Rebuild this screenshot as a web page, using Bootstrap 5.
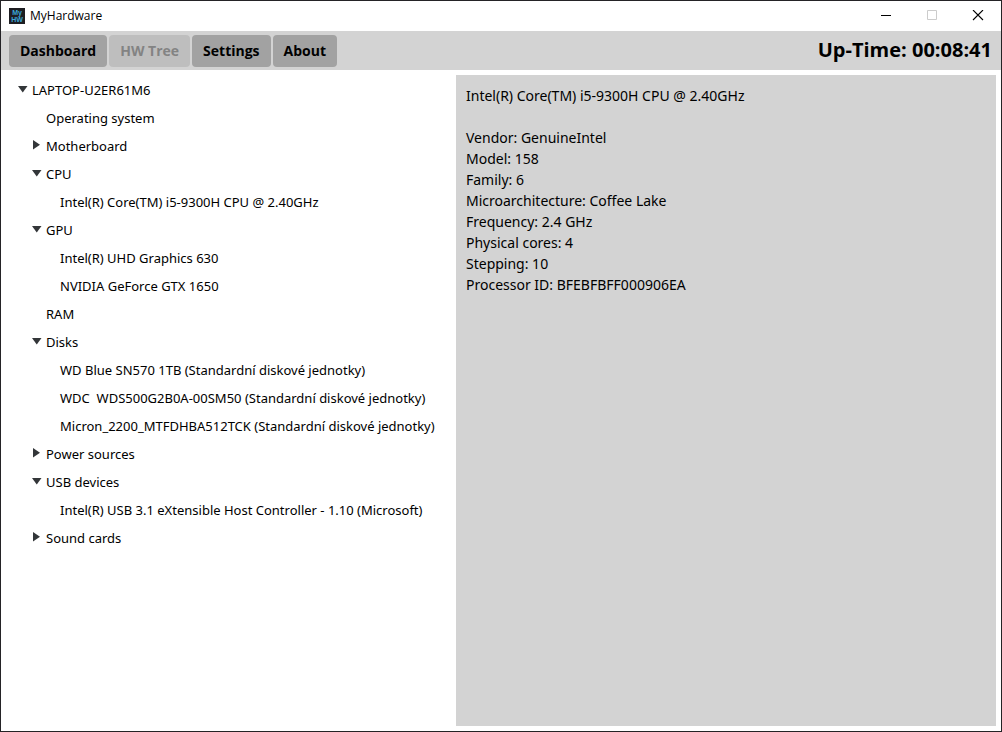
<!DOCTYPE html>
<html lang="en">
<head>
<meta charset="utf-8">
<meta name="viewport" content="width=device-width, initial-scale=1">
<title>MyHardware</title>
<link href="https://cdn.jsdelivr.net/npm/bootstrap@5.3.0/dist/css/bootstrap.min.css" rel="stylesheet">
<style>
  body { font-family: "Noto Sans", "Open Sans", sans-serif; font-size: 13px; color: #000; }
  .app-window { border: 1px solid #242326; }
  .title-bar { height: 30px; font-size: 12px; }
  .app-icon { width: 16px; height: 16px; margin-left: 8px; font: 700 7px "Liberation Sans", sans-serif; }
  .app-name { font-family: "Open Sans", sans-serif; margin-left: 5px; line-height: 16px; }
  .caption-btn { width: 46px; height: 30px; }
  .caption-btn:disabled { opacity: 1; }
  .tool-bar { background: #d3d3d3; padding: 4px 9px 3px 8px; gap: 2px; font-family: "Open Sans", sans-serif; }
  .tool-btn { --bs-btn-padding-x: 11px; --bs-btn-padding-y: 0; --bs-btn-font-size: 14px; --bs-btn-font-family: "Open Sans", sans-serif;
    --bs-btn-bg: #a2a2a2; --bs-btn-color: #000; --bs-btn-border-width: 0;
    --bs-btn-hover-bg: #989898; --bs-btn-hover-color: #000; --bs-btn-active-bg: #8c8c8c;
    --bs-btn-disabled-bg: #bebebe; --bs-btn-disabled-color: #838383; --bs-btn-disabled-opacity: 1;
    --bs-btn-border-radius: 4px; height: 32px; padding-bottom: 2px; font-weight: 700; }
  .up-time { font-size: 20px; font-weight: 700; line-height: 30px; padding-bottom: 2px; }
  .hw-pane { flex: 0 0 455px; padding: 7px 0 0 17px; }
  .hw-pane ul ul { padding-left: 14px; }
  .tree-line { display: flex; align-items: center; height: 28px; white-space: pre; }
  .tree-leaf { padding-left: 14px; }
  .twisty { width: 10px; height: 10px; margin-right: 4px; margin-bottom: 4px; flex: none; }
  .detail-pane { background: #d3d3d3; margin: 5px 5px 5px 0; padding: 10px; font-size: 14px; line-height: 21px; }
</style>
</head>
<body>
<svg class="d-none" aria-hidden="true">
  <symbol id="down" viewBox="0 0 10 10"><path d="M0 2h9.500L4.750 8.500z" fill="#333639"/></symbol>
  <symbol id="right" viewBox="0 0 10 10"><path d="M1 0l7 4.700-7 4.800z" fill="#333639"/></symbol>
</svg>
<div class="app-window d-flex flex-column min-vh-100">
  <header class="title-bar d-flex align-items-center">
    <svg class="app-icon" viewBox="0 0 16 16" aria-hidden="true">
      <rect width="16" height="16" fill="#1d1d21"/>
      <text x="8" y="7" text-anchor="middle" fill="#3aa6d8">My</text>
      <text x="8" y="14" text-anchor="middle" fill="#3aa6d8">HW</text>
    </svg>
    <span class="app-name">MyHardware</span>
    <div class="d-flex ms-auto">
      <button type="button" class="caption-btn btn p-0 border-0 rounded-0 d-flex align-items-center justify-content-center" aria-label="Minimize">
        <svg width="12" height="12" shape-rendering="crispEdges"><path d="M1 5h10v1H1z" fill="#000"/></svg>
      </button>
      <button type="button" class="caption-btn btn p-0 border-0 rounded-0 d-flex align-items-center justify-content-center" aria-label="Maximize" disabled>
        <svg width="12" height="12"><path d="M1.500 .5h9v9h-9z" fill="none" stroke="#ccc"/></svg>
      </button>
      <button type="button" class="caption-btn btn p-0 border-0 rounded-0 d-flex align-items-center justify-content-center" aria-label="Close">
        <svg width="12" height="12"><path d="M1 0l10 10M11 0L1 10" fill="none" stroke="#000" stroke-width="1.100"/></svg>
      </button>
    </div>
  </header>

  <nav class="tool-bar d-flex align-items-center">
    <button type="button" class="btn tool-btn">Dashboard</button>
    <button type="button" class="btn tool-btn" disabled>HW Tree</button>
    <button type="button" class="btn tool-btn">Settings</button>
    <button type="button" class="btn tool-btn">About</button>
    <span class="up-time ms-auto">Up-Time: 00:08:41</span>
  </nav>

  <main class="d-flex flex-grow-1">
    <section class="hw-pane" aria-label="Hardware tree">
      <ul class="list-unstyled mb-0">
        <li>
          <div class="tree-line"><svg class="twisty"><use href="#down"/></svg>LAPTOP-U2ER61M6</div>
          <ul class="list-unstyled">
            <li><div class="tree-line tree-leaf">Operating system</div></li>
            <li><div class="tree-line"><svg class="twisty"><use href="#right"/></svg>Motherboard</div></li>
            <li>
              <div class="tree-line"><svg class="twisty"><use href="#down"/></svg>CPU</div>
              <ul class="list-unstyled">
                <li><div class="tree-line tree-leaf">Intel(R) Core(TM) i5-9300H CPU @ 2.40GHz</div></li>
              </ul>
            </li>
            <li>
              <div class="tree-line"><svg class="twisty"><use href="#down"/></svg>GPU</div>
              <ul class="list-unstyled">
                <li><div class="tree-line tree-leaf">Intel(R) UHD Graphics 630</div></li>
                <li><div class="tree-line tree-leaf">NVIDIA GeForce GTX 1650</div></li>
              </ul>
            </li>
            <li><div class="tree-line tree-leaf">RAM</div></li>
            <li>
              <div class="tree-line"><svg class="twisty"><use href="#down"/></svg>Disks</div>
              <ul class="list-unstyled">
                <li><div class="tree-line tree-leaf">WD Blue SN570 1TB (Standardní diskové jednotky)</div></li>
                <li><div class="tree-line tree-leaf">WDC  WDS500G2B0A-00SM50 (Standardní diskové jednotky)</div></li>
                <li><div class="tree-line tree-leaf">Micron_2200_MTFDHBA512TCK (Standardní diskové jednotky)</div></li>
              </ul>
            </li>
            <li><div class="tree-line"><svg class="twisty"><use href="#right"/></svg>Power sources</div></li>
            <li>
              <div class="tree-line"><svg class="twisty"><use href="#down"/></svg>USB devices</div>
              <ul class="list-unstyled">
                <li><div class="tree-line tree-leaf">Intel(R) USB 3.1 eXtensible Host Controller - 1.10 (Microsoft)</div></li>
              </ul>
            </li>
            <li><div class="tree-line"><svg class="twisty"><use href="#right"/></svg>Sound cards</div></li>
          </ul>
        </li>
      </ul>
    </section>

    <section class="detail-pane flex-grow-1" aria-label="Details">
      <p class="mb-0">Intel(R) Core(TM) i5-9300H CPU @ 2.40GHz</p>
      <br>
      <div>Vendor: GenuineIntel</div>
      <div>Model: 158</div>
      <div>Family: 6</div>
      <div>Microarchitecture: Coffee Lake</div>
      <div>Frequency: 2.4 GHz</div>
      <div>Physical cores: 4</div>
      <div>Stepping: 10</div>
      <div>Processor ID: BFEBFBFF000906EA</div>
    </section>
  </main>
</div>
<script src="https://cdn.jsdelivr.net/npm/bootstrap@5.3.0/dist/js/bootstrap.bundle.min.js"></script>
</body>
</html>
